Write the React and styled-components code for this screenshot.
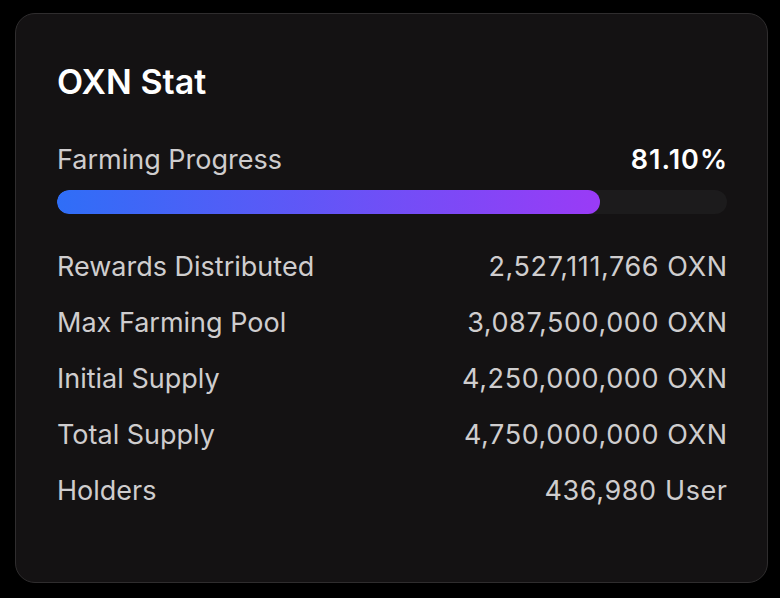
import React from 'react'
import styled, { createGlobalStyle } from 'styled-components'

const GlobalStyle = createGlobalStyle`
  html, body {
    margin: 0;
    padding: 0;
    background: #000;
  }
  body {
    font-family: Inter, "Noto Sans", sans-serif;
    -webkit-font-smoothing: antialiased;
  }
`

const stats = [
  { label: 'Rewards Distributed', value: '2,527,111,766 OXN' },
  { label: 'Max Farming Pool', value: '3,087,500,000 OXN' },
  { label: 'Initial Supply', value: '4,250,000,000 OXN' },
  { label: 'Total Supply', value: '4,750,000,000 OXN' },
  { label: 'Holders', value: '436,980 User' },
]

const progress = 81.1

const App = () => {
  return (
    <>
      <GlobalStyle />
      <Page>
        <Card>
          <Title>OXN Stat</Title>
          <ProgressHead>
            <Label>Farming Progress</Label>
            <Percent>{progress.toFixed(2)}%</Percent>
          </ProgressHead>
          <Track>
            <Fill style={{ width: `${progress}%` }} />
          </Track>
          <List>
            {stats.map((s) => (
              <Row key={s.label}>
                <Label>{s.label}</Label>
                <Value>{s.value}</Value>
              </Row>
            ))}
          </List>
        </Card>
      </Page>
    </>
  )
}

const Page = styled.div`
  width: 780px;
  height: 598px;
  padding: 13px 12px 15px 15px;
  box-sizing: border-box;
`

const Card = styled.div`
  height: 100%;
  box-sizing: border-box;
  background: #141213;
  border: 1.5px solid #2f2d2e;
  border-radius: 20px;
  padding: 48px 40px 0 41px;
  display: flex;
  flex-direction: column;
`

const Title = styled.h2`
  margin: 0;
  color: #fff;
  font-size: 34px;
  font-weight: 600;
  line-height: 40px;
`

const ProgressHead = styled.div`
  display: flex;
  justify-content: space-between;
  align-items: center;
  margin-top: 42px;
`

const Label = styled.span`
  color: #cfcdce;
  font-size: 27px;
  font-weight: 400;
  line-height: 32px;
`

const Percent = styled.span`
  color: #fff;
  font-size: 27px;
  font-weight: 600;
  line-height: 32px;
  letter-spacing: 1px;
  margin-right: -1px;
`

const Track = styled.div`
  margin-top: 14px;
  height: 24px;
  border-radius: 12px;
  background: #1c1b1c;
  overflow: hidden;
`

const Fill = styled.div`
  height: 100%;
  border-radius: 12px;
  background: linear-gradient(90deg, #2f6ef7 0%, #9a3bf6 100%);
`

const List = styled.div`
  display: flex;
  flex-direction: column;
  gap: 24px;
  margin-top: 37px;
`

const Row = styled.div`
  display: flex;
  justify-content: space-between;
  align-items: center;
`

const Value = styled.span`
  color: #cfcdce;
  font-size: 27px;
  line-height: 32px;
  letter-spacing: 0.6px;
  margin-right: -0.6px;
`

export default App
